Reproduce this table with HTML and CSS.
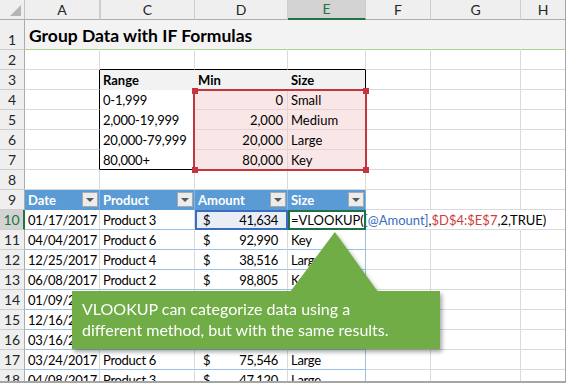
FILE: index.html
```html
<!DOCTYPE html>
<html lang="en">
<head>
    <meta charset="UTF-8">
    <title>Group Data with IF Formulas</title>
    <link rel="stylesheet" href="styles.css">
</head>
<body>
<div class="sheet">
    <table class="grid">
        <colgroup>
            <col class="c-rh"><col class="c-a"><col class="c-c"><col class="c-d">
            <col class="c-e"><col class="c-f"><col class="c-g"><col class="c-h">
        </colgroup>
        <tr class="col-heads">
            <th class="corner"><svg class="corner-tri" width="11" height="11" viewBox="0 0 11 11"><polygon points="11,0 11,11 0,11"/></svg></th>
            <th class="ch">A</th>
            <th class="ch ch-b">C</th>
            <th class="ch">D</th>
            <th class="ch active">E</th>
            <th class="ch">F</th>
            <th class="ch">G</th>
            <th class="ch">H</th>
        </tr>
        <tr class="title-row">
            <th class="rh">1</th>
            <td class="title">Group Data with IF Formulas</td>
            <td></td><td></td><td></td><td></td><td></td><td></td>
        </tr>
        <tr>
            <th class="rh">2</th>
            <td></td><td class="box-top"></td><td class="box-top"></td><td class="box-top"></td><td></td><td></td><td></td>
        </tr>
        <tr>
            <th class="rh">3</th>
            <td class="box-left"></td>
            <td class="kh">Range</td>
            <td class="kh">Min</td>
            <td class="kh kh-last">Size</td>
            <td></td><td></td><td></td>
        </tr>
        <tr>
            <th class="rh">4</th>
            <td class="box-left"></td>
            <td class="kc">0-1,999</td>
            <td class="ref num">0</td>
            <td class="ref ref-last">Small</td>
            <td></td><td></td><td></td>
        </tr>
        <tr>
            <th class="rh">5</th>
            <td class="box-left"></td>
            <td class="kc">2,000-19,999</td>
            <td class="ref num">2,000</td>
            <td class="ref ref-last">Medium</td>
            <td></td><td></td><td></td>
        </tr>
        <tr>
            <th class="rh">6</th>
            <td class="box-left"></td>
            <td class="kc">20,000-79,999</td>
            <td class="ref num">20,000</td>
            <td class="ref ref-last">Large</td>
            <td></td><td></td><td></td>
        </tr>
        <tr>
            <th class="rh">7</th>
            <td class="box-left"></td>
            <td class="kc kc-bottom">80,000+</td>
            <td class="ref num ref-bottom">80,000</td>
            <td class="ref ref-last ref-bottom">Key</td>
            <td></td><td></td><td></td>
        </tr>
        <tr>
            <th class="rh">8</th>
            <td></td><td></td><td></td><td></td><td></td><td></td><td></td>
        </tr>
        <tr>
            <th class="rh">9</th>
            <td class="hd"><div class="hd-in"><span>Date</span><span class="filter"></span></div></td>
            <td class="hd"><div class="hd-in"><span>Product</span><span class="filter"></span></div></td>
            <td class="hd"><div class="hd-in"><span>Amount</span><span class="filter"></span></div></td>
            <td class="hd"><div class="hd-in"><span>Size</span><span class="filter"></span></div></td>
            <td></td><td></td><td></td>
        </tr>
        <tr>
            <th class="rh active">10</th>
            <td class="dt">01/17/2017</td>
            <td class="dt">Product 3</td>
            <td class="dt amt amt-ref"><div class="amt-in"><span>$</span><span>41,634</span></div></td>
            <td class="dt editing">=VLOOKUP(<span class="f-blue">[@Amount]</span>,<span class="f-red">$D$4:$E$7</span>,2,TRUE)</td>
            <td class="ovf"></td><td class="ovf"></td><td></td>
        </tr>
        <tr>
            <th class="rh">11</th>
            <td class="dt">04/04/2017</td>
            <td class="dt">Product 6</td>
            <td class="dt amt"><div class="amt-in"><span>$</span><span>92,990</span></div></td>
            <td class="dt">Key</td>
            <td></td><td></td><td></td>
        </tr>
        <tr>
            <th class="rh">12</th>
            <td class="dt">12/25/2017</td>
            <td class="dt">Product 4</td>
            <td class="dt amt"><div class="amt-in"><span>$</span><span>38,516</span></div></td>
            <td class="dt">Large</td>
            <td></td><td></td><td></td>
        </tr>
        <tr>
            <th class="rh">13</th>
            <td class="dt">06/08/2017</td>
            <td class="dt">Product 2</td>
            <td class="dt amt"><div class="amt-in"><span>$</span><span>98,805</span></div></td>
            <td class="dt">Key</td>
            <td></td><td></td><td></td>
        </tr>
        <tr>
            <th class="rh">14</th>
            <td class="dt">01/09/2017</td>
            <td class="dt">Product 1</td>
            <td class="dt amt"><div class="amt-in"><span>$</span><span>12,450</span></div></td>
            <td class="dt">Medium</td>
            <td></td><td></td><td></td>
        </tr>
        <tr>
            <th class="rh">15</th>
            <td class="dt">12/16/2017</td>
            <td class="dt">Product 5</td>
            <td class="dt amt"><div class="amt-in"><span>$</span><span>64,208</span></div></td>
            <td class="dt">Large</td>
            <td></td><td></td><td></td>
        </tr>
        <tr>
            <th class="rh">16</th>
            <td class="dt">03/16/2017</td>
            <td class="dt">Product 2</td>
            <td class="dt amt"><div class="amt-in"><span>$</span><span>83,117</span></div></td>
            <td class="dt">Key</td>
            <td></td><td></td><td></td>
        </tr>
        <tr>
            <th class="rh">17</th>
            <td class="dt">03/24/2017</td>
            <td class="dt">Product 6</td>
            <td class="dt amt"><div class="amt-in"><span>$</span><span>75,546</span></div></td>
            <td class="dt">Large</td>
            <td></td><td></td><td></td>
        </tr>
        <tr>
            <th class="rh">18</th>
            <td class="dt">04/08/2017</td>
            <td class="dt">Product 3</td>
            <td class="dt amt"><div class="amt-in"><span>$</span><span>47,120</span></div></td>
            <td class="dt">Large</td>
            <td></td><td></td><td></td>
        </tr>
    </table>

    <!-- formula reference highlight for $D$4:$E$7 -->
    <div class="ref-range">
        <span class="handle h-tl"></span>
        <span class="handle h-tr"></span>
        <span class="handle h-bl"></span>
        <span class="handle h-br"></span>
    </div>

    <div class="callout">
        <div class="callout-tip"></div>
        <div class="callout-box">VLOOKUP can categorize data using a<br>different method, but with the same results.</div>
    </div>
</div>
</body>
</html>
```

FILE: styles.css
```css
* {
    box-sizing: border-box;
}
body {
    margin: 0;
    font-family: Lato, "Liberation Sans", sans-serif;
    background-color: white;
}
.sheet {
    position: relative;
    width: 566px;
    height: 383px;
    overflow: hidden;
    border-right: 1px solid #a6a6a6;
    border-bottom: 2px solid #a6a6a6;
}
.grid {
    border-collapse: separate;
    border-spacing: 0;
    table-layout: fixed;
    width: 566px;
    font-size: 13px;
    color: black;
}
.c-rh { width: 25px; }
.c-a { width: 75px; }
.c-c { width: 95px; }
.c-d { width: 93px; }
.c-e { width: 78px; }
.c-f { width: 65px; }
.c-g { width: 90px; }
.c-h { width: 45px; }

.grid td,
.grid th {
    height: 20px;
    padding: 0 3px;
    border-right: 1px solid #dadada;
    border-bottom: 1px solid #dadada;
    white-space: nowrap;
    overflow: visible;
    vertical-align: bottom;
    line-height: 18px;
    font-weight: normal;
    text-align: left;
}

/* column and row headers */
.grid th.corner {
    background-color: #efefef;
    border-right: 1px solid #c4c4c4;
    border-bottom: 1px solid #ababab;
    padding: 0 3px 3px 0;
}
.corner-tri {
    display: block;
    margin-left: auto;
    fill: #b5b5b5;
}
.grid th.ch {
    background-color: #efefef;
    border-right: 1px solid #cdcdcd;
    border-bottom: 1px solid #ababab;
    text-align: center;
    color: #262626;
    font-size: 14px;
    vertical-align: middle;
}
.grid th.ch-b {
    border-left: 1px solid #cdcdcd;
}
.grid th.ch.active {
    background-color: #d3d3d3;
    color: #217346;
    border-bottom: 2px solid #217346;
}
.grid th.rh {
    background-color: #efefef;
    border-right: 1px solid #ababab;
    border-bottom: 1px solid #cdcdcd;
    text-align: center;
    color: #262626;
    font-size: 14px;
    padding: 0;
}
.grid th.rh.active {
    background-color: #d3d3d3;
    color: #217346;
    border-right: 2px solid #217346;
}

/* title row */
.title-row td {
    height: 30px;
    background-color: #f3f3f3;
    border-right-color: #f3f3f3;
    border-bottom: 1px solid #a9d08e;
}
.grid td.title {
    font-size: 17.5px;
    font-weight: bold;
    line-height: 26px;
    padding-left: 4px;
}

/* lookup table C3:E7 */
.grid td.box-top {
    border-bottom-color: black;
}
.grid td.box-left {
    border-right-color: black;
}
.grid td.kh {
    background-color: #f2f2f2;
    font-weight: bold;
    border-right-color: transparent;
    border-bottom-color: transparent;
}
.grid td.kh-last {
    border-right-color: black;
}
.grid td.kc {
    letter-spacing: -0.2px;
    border-right-color: transparent;
    border-bottom-color: transparent;
}
.grid td.kc-bottom {
    border-bottom-color: black;
}
.grid td.ref {
    background-color: #f9e6e6;
    border-right-color: #e6d2d2;
    border-bottom-color: #e6d2d2;
}
.grid td.num {
    text-align: right;
    padding-right: 4px;
}
.grid td.ref-last {
    border-right-color: black;
}
.grid td.ref-bottom {
    border-bottom-color: black;
}
.ref-range {
    position: absolute;
    left: 193px;
    top: 89px;
    width: 174px;
    height: 82px;
    border: 2px solid #c4353f;
}
.handle {
    position: absolute;
    width: 6px;
    height: 6px;
    background-color: #c4353f;
}
.h-tl { left: -3px; top: -3px; }
.h-tr { right: -4px; top: -3px; }
.h-bl { left: -3px; bottom: -4px; }
.h-br { right: -4px; bottom: -4px; }

/* data table */
.grid td.hd {
    background-color: #5b9bd5;
    color: white;
    font-weight: bold;
    border-right-color: #86b5e2;
    border-bottom-color: #5b9bd5;
    padding: 0 1px 0 3px;
}
.hd-in {
    display: flex;
    justify-content: space-between;
    align-items: center;
    height: 19px;
}
.filter {
    position: relative;
    width: 16px;
    height: 15px;
    background-color: #ececec;
    border: 1px solid #a9a9a9;
}
.filter::after {
    content: "";
    position: absolute;
    left: 3px;
    top: 5px;
    border-left: 4px solid transparent;
    border-right: 4px solid transparent;
    border-top: 4px solid #595959;
}
.grid td.dt {
    letter-spacing: -0.3px;
    border-bottom-color: #9bc2e6;
}
.grid td.dt:nth-child(5) {
    border-right-color: #9bc2e6;
}
.grid td.amt {
    padding: 0 9px 0 8px;
}
.amt-in {
    display: flex;
    justify-content: space-between;
}
.grid td.amt-ref {
    background-color: #e9eef6;
    outline: 2px solid #3a6cc0;
    outline-offset: -2px;
}
.grid td.editing {
    letter-spacing: 0;
    outline: 2px solid #1e7145;
    outline-offset: -2px;
    padding-left: 3px;
}
.grid td.ovf {
    border-right-color: white;
}
.f-blue {
    color: #3a6cc0;
}
.f-red {
    color: #d23b3b;
}

/* callout */
.callout {
    position: absolute;
    left: 72px;
    top: 232px;
    width: 368px;
    filter: drop-shadow(2px 3px 2px rgba(0, 0, 0, 0.35));
}
.callout-tip {
    position: absolute;
    left: 218px;
    top: 0;
    width: 88px;
    height: 60px;
    background-color: #70ad47;
    clip-path: polygon(51% 0, 100% 100%, 0 100%);
}
.callout-box {
    margin-top: 59px;
    height: 58px;
    background-color: #70ad47;
    color: white;
    font-size: 16px;
    line-height: 21px;
    padding: 7px 0 0 10px;
}
```
